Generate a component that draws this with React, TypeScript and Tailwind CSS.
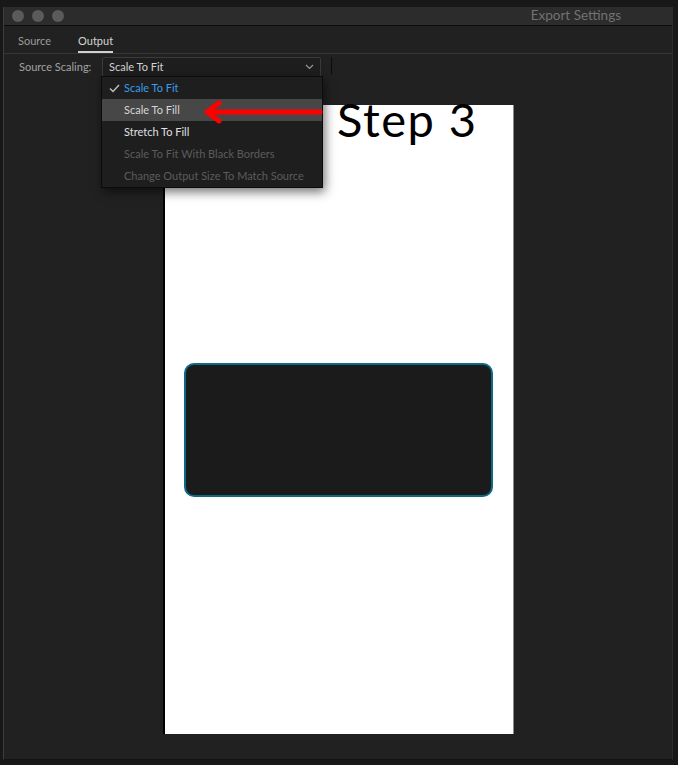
import React from "react";

const ui = { fontFamily: "Lato, 'Open Sans', sans-serif" };

function Chevron() {
  return (
    <svg width="9" height="6" viewBox="0 0 9 6" className="block">
      <path d="M1 1 L4.5 4.5 L8 1" fill="none" stroke="#9a9a9a" strokeWidth="1.1" />
    </svg>
  );
}

function Check() {
  return (
    <svg width="11" height="9" viewBox="0 0 11 9" className="block">
      <path d="M1 4.5 L4 7.5 L10 1" fill="none" stroke="#bdbdbd" strokeWidth="1.5" />
    </svg>
  );
}

export default function App() {
  const items = [
    { label: "Scale To Fit", cls: "text-[#3d9be9]", check: true },
    { label: "Scale To Fill", cls: "text-[#d6d6d6] bg-[#474747]" },
    { label: "Stretch To Fill", cls: "text-[#e0e0e0]" },
    { label: "Scale To Fit With Black Borders", cls: "text-[#5c5c5c]" },
    { label: "Change Output Size To Match Source", cls: "text-[#5c5c5c]" },
  ];
  return (
    <div className="relative w-[678px] h-[765px] bg-[#181818] pt-[7px] pl-[3px] overflow-hidden" style={ui}>
      <div className="w-[670px] h-[753px] bg-[#212121] border-l border-[#3d3d3d] border-r border-r-[#2c2c2c] border-b border-b-[#141414] flex flex-col">
        {/* title bar */}
        <div className="h-[19px] bg-[#2c2c2c] border-b border-[#0c0c0c] flex items-center pl-[8px] gap-[8px]">
          <div className="w-[12px] h-[12px] rounded-full bg-[#5b5b5b]" />
          <div className="w-[12px] h-[12px] rounded-full bg-[#5b5b5b]" />
          <div className="w-[12px] h-[12px] rounded-full bg-[#5b5b5b]" />
          <div className="flex-1" />
          <div className="text-[13.5px] text-[#727272] pr-[51px] leading-none">Export Settings</div>
        </div>
        {/* tabs */}
        <div className="h-[28px] border-b border-[#363636] flex items-end pl-[14px] gap-[27px] text-[11px]">
          <div className="text-[#9c9c9c] pb-[7px] leading-none">Source</div>
          <div className="text-[#d4d4d4] pb-[5px] border-b-2 border-[#cfcfcf] leading-none">Output</div>
        </div>
        {/* scaling row */}
        <div className="relative h-[24px] flex items-start pt-[3px] pl-[15px] text-[11px]">
          <div className="h-[20px] flex items-center text-[#a3a3a3] w-[83px]">Source Scaling:</div>
          <div className="h-[20px] w-[219px] bg-[#1e1e1e] border border-[#3a3a3a] rounded-[2px] flex items-center pl-[6px] pr-[6px] text-[#d3d3d3]">
            <span className="flex-1">Scale To Fit</span>
            <Chevron />
          </div>
          <div className="ml-[10px] w-[1px] h-[17px] bg-[#0c0c0c]" />
          {/* dropdown menu */}
          <div className="absolute left-[97px] top-[22px] w-[222px] bg-[#1e1e1e] border border-[#0c0c0c] shadow-[2px_4px_10px_rgba(0,0,0,0.55)] z-10 text-[11px]">
            {items.map((it) => (
              <div key={it.label} className={`h-[22px] flex items-center ${it.cls}`}>
                <div className="w-[22px] flex justify-center pl-[3px]">{it.check ? <Check /> : null}</div>
                <span>{it.label}</span>
              </div>
            ))}
          </div>
        </div>
        {/* preview */}
        <div className="flex-1 flex justify-center pt-[27px]">
          <div className="w-[351px] h-[629px] bg-white border-l-2 border-black border-r border-r-[#8a8a8a] pt-[258px] pl-[19px] pr-[20px]">
            <div className="h-[134px] bg-[#1b1b1b] border-2 border-[#0d6a87] rounded-[10px]" />
          </div>
        </div>
      </div>

      {/* annotation: arrow + Step 3 */}
      <svg className="absolute left-[198px] top-[98px] z-20" width="130" height="30" viewBox="0 0 130 30">
        <path d="M10 14 L122 14" stroke="#ff0000" strokeWidth="5" strokeLinecap="round" fill="none" />
        <path d="M21 5 L9 14 L21 23" stroke="#ff0000" strokeWidth="5" strokeLinecap="round" strokeLinejoin="round" fill="none" />
      </svg>
      <div
        className="absolute left-[337px] top-[96px] z-20 text-[47px] leading-none text-black tracking-[1.5px]"
        style={{ fontFamily: "Lato, sans-serif" }}
      >
        Step 3
      </div>
    </div>
  );
}
